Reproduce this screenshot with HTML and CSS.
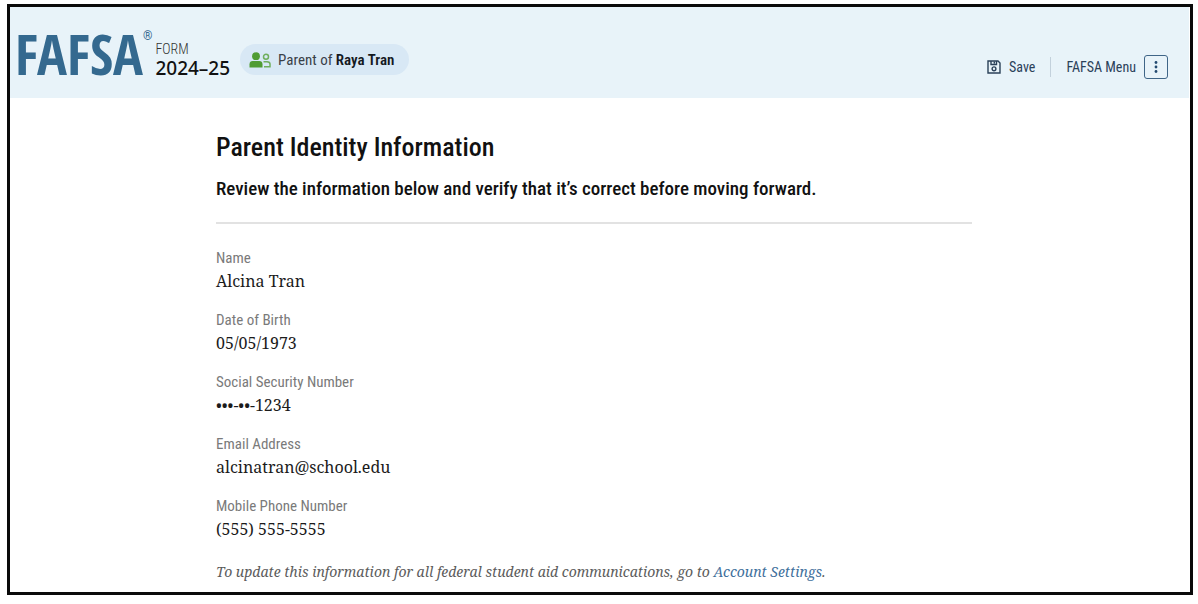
FILE: index.html
```html
<!DOCTYPE html>
<html lang="en">
<head>
<meta charset="utf-8">
<meta name="viewport" content="width=device-width, initial-scale=1">
<title>FAFSA Form – Parent Identity Information</title>
<link rel="stylesheet" href="styles.css">
</head>
<body>
<div class="frame">
  <header class="header">
    <div class="brand">
      <span class="logo">FAFSA<sup class="logo-mark">®</sup></span>
      <span class="form-year"><span class="form-word">FORM</span><span class="year">2024–25</span></span>
    </div>
    <div class="role">
      <svg class="role-icon" viewBox="0 0 22 16" aria-hidden="true">
        <circle cx="7" cy="4.200" r="3.900" fill="#4f9c33"/>
        <path d="M0.500 15.500v-3.300c0-2 1.300-3.200 3.200-3.200h6.600c1.900 0 3.200 1.200 3.200 3.200v3.300z" fill="#4f9c33"/>
        <circle cx="17" cy="4.800" r="2.500" fill="none" stroke="#6fae5c" stroke-width="1.500"/>
        <path d="M14.500 9.800h3.500c1.800 0 3 .8 3 2.300v2.600h-6" fill="none" stroke="#6fae5c" stroke-width="1.500"/>
      </svg>
      <span>Parent of <strong>Raya Tran</strong></span>
    </div>
    <div class="actions">
      <button class="action" type="button">
        <svg class="save-icon" viewBox="0 0 14 14" fill="none" stroke="#2b4159" stroke-width="1.400" aria-hidden="true">
          <path d="M1 1h10l2 2v10H1z"/>
          <path d="M4 1v3.500h5.500V1M7.300 1.500v2"/>
          <circle cx="7" cy="8.800" r="1.900"/>
        </svg>
        Save
      </button>
      <span class="divider"></span>
      <button class="action" type="button">
        FAFSA Menu
        <span class="menu-box">
          <svg class="dots" viewBox="0 0 4 14" fill="#234a70" aria-hidden="true">
            <circle cx="2" cy="2.500" r="1.400"/><circle cx="2" cy="7" r="1.400"/><circle cx="2" cy="11.500" r="1.400"/>
          </svg>
        </span>
      </button>
    </div>
  </header>
  <main class="main">
    <h1 class="title">Parent Identity Information</h1>
    <p class="intro">Review the information below and verify that it’s correct before moving forward.</p>
    <dl class="details">
      <div><dt>Name</dt><dd>Alcina Tran</dd></div>
      <div><dt>Date of Birth</dt><dd>05/05/1973</dd></div>
      <div><dt>Social Security Number</dt><dd>•••-••-1234</dd></div>
      <div><dt>Email Address</dt><dd>alcinatran@school.edu</dd></div>
      <div><dt>Mobile Phone Number</dt><dd>(555) 555-5555</dd></div>
    </dl>
    <p class="note">To update this information for all federal student aid communications, go to <a href="#settings">Account Settings</a>.</p>
  </main>
</div>
</body>
</html>
```
FILE: styles.css
```css
* {
  box-sizing: border-box;
}

body {
  margin: 0;
  padding: 4px 5px 0 7px;
  background: #fff;
  color: #1b1b1b;
  font-family: "Roboto Condensed", "Liberation Sans", sans-serif;
}

.frame {
  border: 3px solid #0a0a0a;
}

.header {
  display: flex;
  align-items: center;
  min-height: 91px;
  margin-right: 1px;
  padding: 0 21px 0 5px;
  background: #e8f3f9;
}

.brand {
  display: flex;
  align-items: center;
}

.logo {
  display: flex;
  align-items: flex-start;
  color: #34698f;
  font-family: "Open Sans Condensed", "Roboto Condensed", sans-serif;
  font-size: 56px;
  font-weight: 700;
  line-height: 74px;
}

.logo-mark {
  font-family: "Roboto Condensed", sans-serif;
  font-size: 12px;
  font-weight: 400;
  line-height: 40px;
}

.form-year {
  display: flex;
  flex-direction: column;
  margin-left: 3px;
  padding-top: 12px;
}

.form-word {
  color: #333;
  font-size: 14px;
  font-weight: 300;
  line-height: 18px;
}

.year {
  color: #111;
  font-family: "Noto Sans", sans-serif;
  font-size: 19px;
  font-weight: 500;
  line-height: 20px;
}

.role {
  display: flex;
  align-items: center;
  gap: 7px;
  height: 31px;
  margin: 14px 0 0 10px;
  padding: 0 15px 0 9px;
  border-radius: 16px;
  background: #d8e8f5;
  color: #3a4149;
  font-size: 15px;
}

.role strong {
  color: #14191f;
  font-weight: 600;
}

.role-icon {
  width: 22px;
  height: 16px;
}

.actions {
  display: flex;
  align-items: center;
  gap: 15px;
  margin-left: auto;
  padding-top: 28px;
}

.action {
  display: flex;
  align-items: center;
  gap: 8px;
  padding: 0;
  border: 0;
  background: none;
  color: #2b4159;
  font: 400 14px/24px "Roboto Condensed", sans-serif;
}

.save-icon {
  width: 14px;
  height: 14px;
}

.divider {
  width: 1px;
  height: 20px;
  background: #c3d1dc;
}

.menu-box {
  display: grid;
  place-items: center;
  width: 24px;
  height: 24px;
  border: 1px solid #3f6587;
  border-radius: 3px;
}

.dots {
  width: 4px;
  height: 14px;
}

.main {
  max-width: 962px;
  padding: 32px 0 8px 206px;
}

.title {
  margin: 0;
  color: #111;
  font-size: 26px;
  font-weight: 500;
  line-height: 34px;
}

.intro {
  margin: 0;
  padding: 12px 0 20px;
  border-bottom: 2px solid #e2e2e2;
  color: #111;
  font-size: 19px;
  font-weight: 500;
  line-height: 26px;
}

.details {
  display: grid;
  gap: 16px;
  margin: 22px 0 0;
}

.details dt {
  color: #7a7a7a;
  font-size: 15px;
  font-weight: 400;
  line-height: 24px;
}

.details dd {
  margin: 0;
  font-family: "Noto Serif", "Liberation Serif", serif;
  font-size: 16px;
  line-height: 22px;
}

.note {
  margin: 20px 0 0;
  color: #5c5c5c;
  font-family: "Noto Serif", "Liberation Serif", serif;
  font-size: 14px;
  font-style: italic;
  line-height: 24px;
}

.note a {
  color: #3f709c;
  text-decoration: none;
}
```
